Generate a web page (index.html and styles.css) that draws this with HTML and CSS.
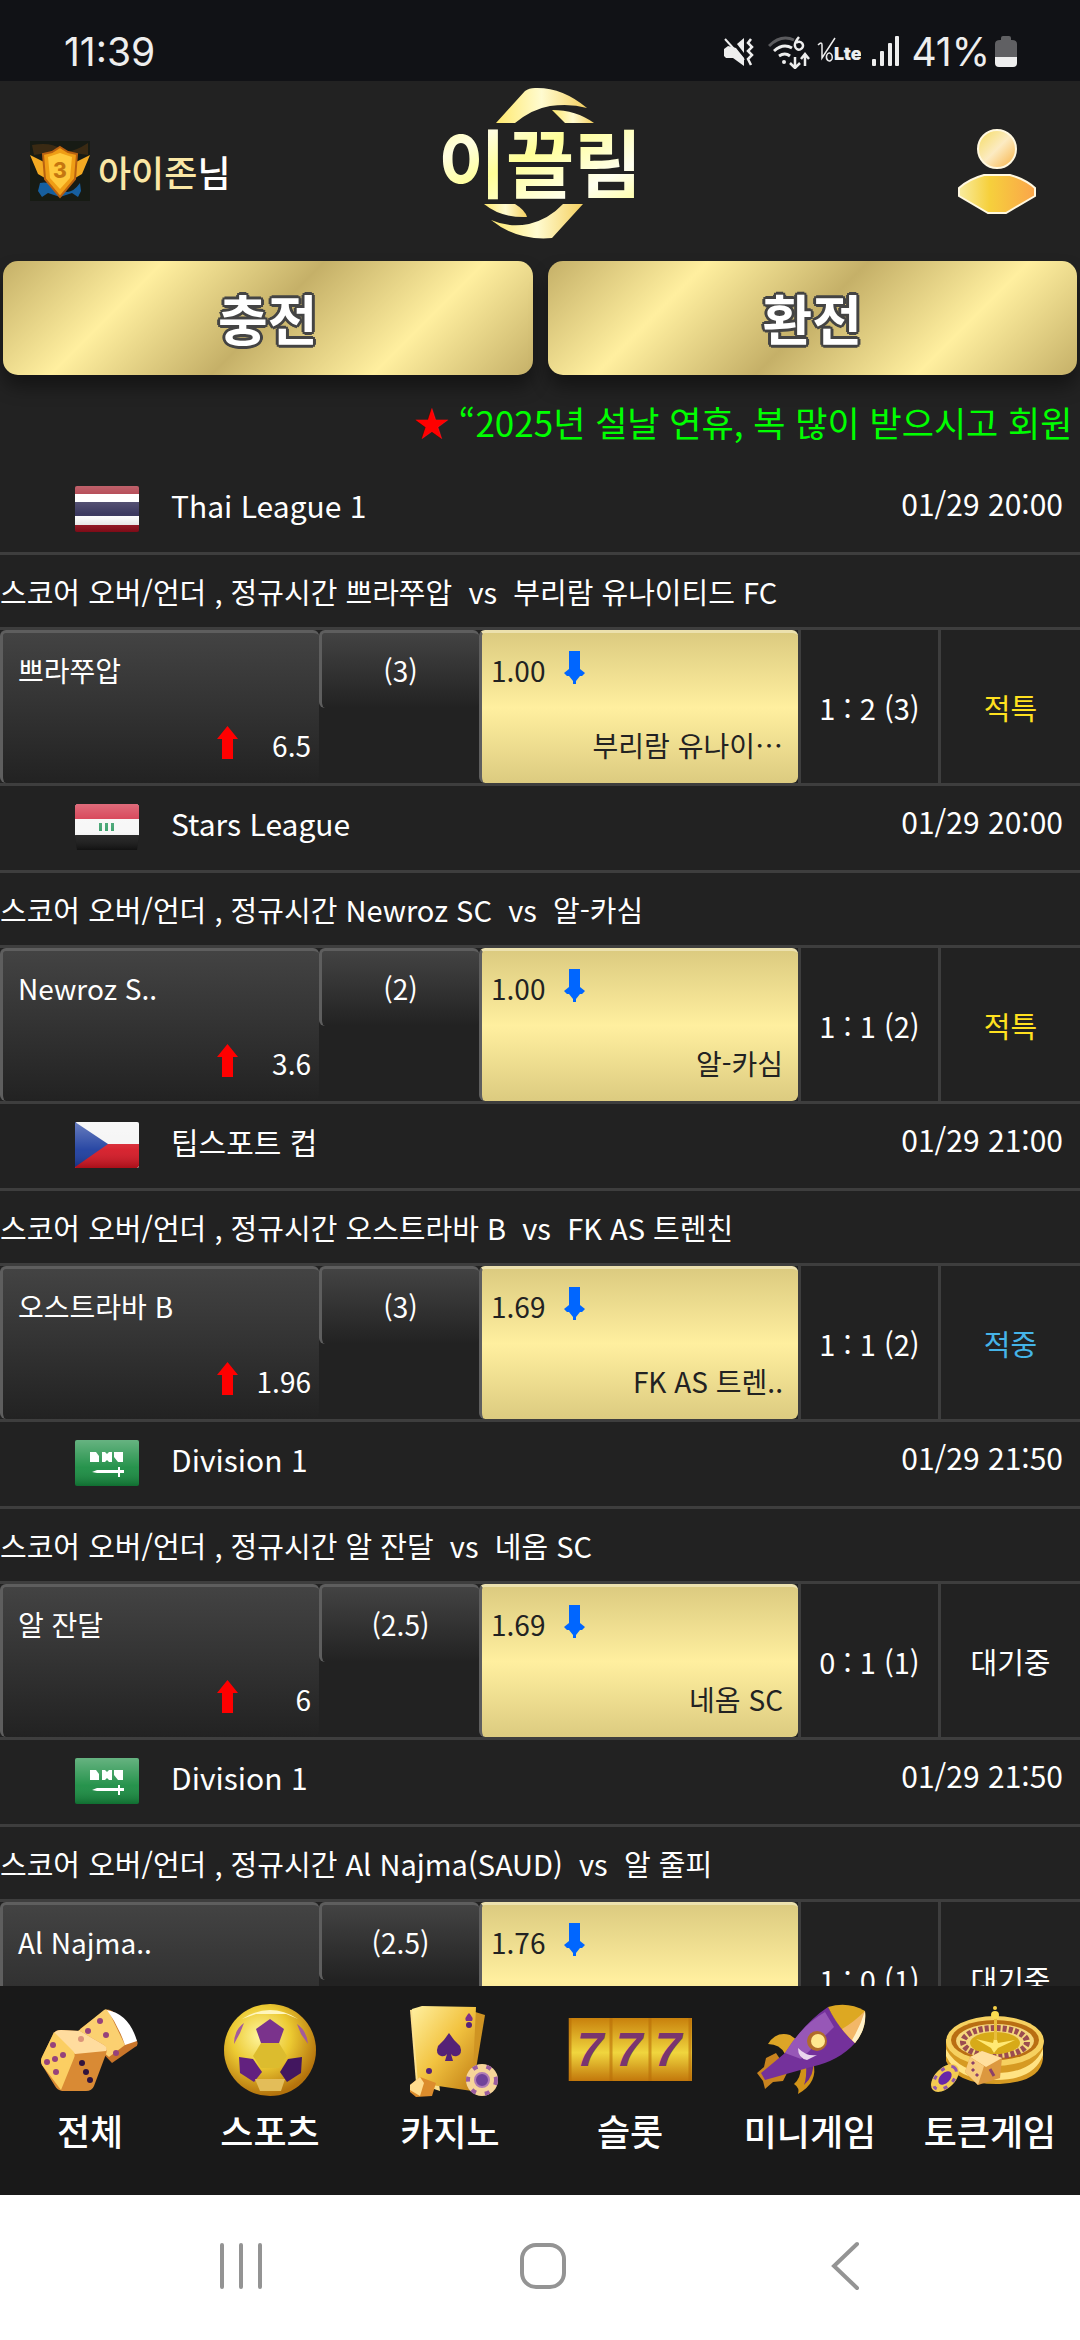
FILE: index.html
```html
<!DOCTYPE html>
<html lang="ko">
<head>
  <meta charset="UTF-8" />
  <meta name="viewport" content="width=device-width, initial-scale=1.0" />
  <title>이끌림</title>
  <link rel="stylesheet" href="styles.css">
</head>
<body>
  <!-- shared flags, arrows and gradients -->
  <svg class="defs" aria-hidden="true">
    <defs>
      <linearGradient id="gloss" x1="0" y1="0" x2="0" y2="1">
        <stop offset="0" stop-color="#fff" stop-opacity=".35" />
        <stop offset=".6" stop-color="#fff" stop-opacity=".08" />
        <stop offset="1" stop-color="#000" stop-opacity=".2" />
      </linearGradient>
      <linearGradient id="gold" x1="0" y1="0" x2="1" y2="1">
        <stop offset="0" stop-color="#fff0a0" />
        <stop offset=".5" stop-color="#f2c340" />
        <stop offset="1" stop-color="#c07e14" />
      </linearGradient>
    </defs>
    <symbol id="flag-th" viewBox="0 0 64 46">
      <rect width="64" height="46" rx="2" fill="#9c0d1c" />
      <rect y="8" width="64" height="31" fill="#fff" />
      <rect y="16" width="64" height="14" fill="#2b2852" />
      <rect width="64" height="46" rx="2" fill="url(#gloss)" />
    </symbol>
    <symbol id="flag-iq" viewBox="0 0 64 46">
      <path d="M2 0h60l2 2v30H0V2z" fill="#f6f6f6" />
      <path d="M2 0h60l2 2v13H0V2z" fill="#cf1c34" />
      <path d="M0 31h64l-2 15H2z" fill="#161616" />
      <path d="M24 19h3v8h-3zM30 19h3v8h-3zM36 19h3v8h-3z" fill="#2f9a63" />
      <path d="M2 0h60l2 2v29l-2 15H2L0 31V2z" fill="url(#gloss)" />
    </symbol>
    <symbol id="flag-cz" viewBox="0 0 64 46">
      <rect width="64" height="46" rx="2" fill="#f4f4f4" />
      <path d="M0 22h64v22l-2 2H0z" fill="#d4121f" />
      <path d="M0 0l33 22L0 45z" fill="#17389c" />
      <rect width="64" height="46" rx="2" fill="url(#gloss)" />
    </symbol>
    <symbol id="flag-sa" viewBox="0 0 64 46">
      <rect width="64" height="46" rx="2" fill="#148a3d" />
      <rect width="64" height="46" rx="2" fill="url(#gloss)" />
      <path d="M15 12h6l3 4v6h-9zM27 12h3l2 2 2-2h3v10h-3l-2-2-2 2h-3zM39 12h9v10h-5l-4-5z" fill="#fff" />
      <path d="M17 32l5-2h21v-3h2v3h4v3h-4v4h-2v-4H22z" fill="#fff" />
    </symbol>
    <symbol id="arrow-up" viewBox="0 0 21 33">
      <path d="M10.500 0L21 13h-5v20H5V13H0z" fill="#f00" />
    </symbol>
    <symbol id="arrow-down" viewBox="0 0 21 33">
      <path d="M5 0h11v18l5 4-3 3h-2l-4 5v3H9v-3l-4-5H3l-3-3 5-4z" fill="#06f" />
    </symbol>
  </svg>

  <div class="status-bar">
    <span class="clock">11:39</span>
    <div class="status-icons">
      <svg width="32" height="32" viewBox="0 0 32 32" fill="#eee">
        <path d="M1 13l4-3 8 2 8 10v8l-11-8H3l-2-2z" />
        <path d="M14 8l7-6v15z" />
        <path d="M2 3l19 21" stroke="#eee" stroke-width="2" />
        <path d="M28 3l-3 4 4 4-4 4 4 4-4 4 3 6" fill="none" stroke="#eee" stroke-width="2.500" />
      </svg>
      <svg class="wifi" width="44" height="34" viewBox="0 0 44 34" fill="none" stroke="#eee" stroke-width="3">
        <path d="M1 11Q13-1 26 5" stroke="#5b5b5e" />
        <path d="M6 16q9-8 18-3M11 21q6-4 11 0" />
        <circle cx="16" cy="27" r="2" fill="#eee" stroke="none" />
        <path d="M31 2q-5 6-4 9a4 4 0 1 0 1-3M27 22v10M22 28l5 5 5-5M37 31V20M33 24l4-5 4 5" stroke-width="2.500" />
      </svg>
      <svg width="44" height="30" viewBox="0 0 44 30">
        <path d="M1 8q4-4 4 0v13l13-20M13 16a3 4 0 1 0 2 6q1-4-2-6" fill="none" stroke="#eee" stroke-width="1.500" />
        <text x="17" y="23" class="lte">Lte</text>
      </svg>
      <svg class="signal" width="28" height="31" viewBox="0 0 28 31" fill="#eee">
        <rect y="23" width="4" height="7" rx="1" />
        <rect x="8" y="15" width="4" height="15" rx="1" />
        <rect x="16" y="7" width="4" height="23" rx="1" />
        <rect x="23" width="4" height="30" rx="1" />
      </svg>
      <span class="percent">41%</span>
      <svg width="22" height="32" viewBox="0 0 22 32">
        <path d="M6 4V2q0-2 2-2h6q2 0 2 2v2h1q5 0 5 4v13H0V8q0-4 5-4z" fill="#606063" />
        <path d="M0 21h22v6q0 4-4 4H4q-4 0-4-4z" fill="#eee" />
      </svg>
    </div>
  </div>

  <header class="header">
    <div class="user">
      <svg width="60" height="60" viewBox="0 0 60 60">
        <rect width="60" height="60" fill="#171b14" />
        <path d="M2 4q20-3 28 4T58 2v12L30 10 4 14z" fill="#3a2a13" />
        <path d="M10 42q10-2 20 6t20-6l1 8-3 6-6-4-12 4-12-4-6 4-4-6z" fill="#175f9f" />
        <path d="M0 14l16 8 4 18L8 33zM60 14l-16 8-4 18 12-7z" fill="#f3aa22" />
        <path d="M30 6l8 5 9 2-2 25-15 18-15-18-2-25 9-2z" fill="#ef9d15" stroke="#b96110" stroke-width="2" />
        <path d="M30 12l12 4-2 21-10 11-10-11-2-21z" fill="#ffc93c" />
        <text x="30" y="37" class="badge-num">3</text>
      </svg>
      <span class="user-name"><em>아이존</em>님</span>
    </div>

    <a class="logo" href="#" aria-label="이끌림">
      <svg width="210" height="172" viewBox="0 0 210 172">
        <defs>
          <linearGradient id="logo-gold" x1="0" y1="0" x2="1" y2="1">
            <stop offset="0" stop-color="#ffff8c" />
            <stop offset=".25" stop-color="#fffde0" />
            <stop offset=".45" stop-color="#ffff96" />
            <stop offset=".75" stop-color="#fffff0" />
            <stop offset="1" stop-color="#ffff8c" />
          </linearGradient>
          <linearGradient id="swoosh" x1="0" y1="0" x2="1" y2="0">
            <stop offset="0" stop-color="#ffe96e" />
            <stop offset=".5" stop-color="#fffbd0" />
            <stop offset="1" stop-color="#f5d060" />
          </linearGradient>
        </defs>
        <path d="M61 38L90 6Q94 3 100 3q27-1 52 20-17-5-37-2-18 3-35 17z" fill="url(#swoosh)" />
        <path d="M117 25q24 0 42 13h-29z" fill="url(#swoosh)" />
        <path d="M49 119h31q10 6 12 13-26 1-43-13z" fill="url(#swoosh)" />
        <path d="M56 135q18 8 38 4 20-5 34-20h20l-31 34q-35 3-61-18z" fill="url(#swoosh)" />
        <text x="105" y="107" class="logo-text" fill="url(#logo-gold)">이끌림</text>
      </svg>
    </a>

    <button class="profile" type="button" aria-label="내 정보">
      <svg width="78" height="86" viewBox="0 0 78 86">
        <defs>
          <linearGradient id="head" x1="0" y1="0" x2="1" y2="1">
            <stop offset="0" stop-color="#f5dc60" />
            <stop offset=".5" stop-color="#fcebc2" />
            <stop offset="1" stop-color="#f8b040" />
          </linearGradient>
          <linearGradient id="torso" x1="0" y1="0" x2="1" y2="0">
            <stop offset="0" stop-color="#f8eca0" />
            <stop offset=".4" stop-color="#f6d03c" />
            <stop offset="1" stop-color="#faa54a" />
          </linearGradient>
        </defs>
        <circle cx="39" cy="21" r="19" fill="url(#head)" stroke="#fff8e0" stroke-width="2" />
        <path d="M26 47h26q15 4 25 13v8L48 85H30L1 68v-8q10-9 25-13z" fill="url(#torso)" stroke="#fff8e0" stroke-width="2" />
      </svg>
    </button>
  </header>

  <div class="money-btns">
    <button class="money-btn" type="button">충전</button>
    <button class="money-btn" type="button">환전</button>
  </div>

  <div class="notice"><span class="star">★</span> “2025년 설날 연휴, 복 많이 받으시고 회원</div>

  <main class="games">
    <section class="game">
      <div class="league">
        <svg class="flag"><use href="#flag-th" /></svg>
        <span class="league-name">Thai League 1</span>
        <time class="date">01/29 20:00</time>
      </div>
      <div class="match">스코어 오버/언더 , 정규시간 쁘라쭈압&nbsp; vs &nbsp;부리람 유나이티드 FC</div>
      <div class="odds">
        <button class="pick home" type="button">
          <span class="team">쁘라쭈압</span>
          <span class="rate"><svg class="arrow"><use href="#arrow-up" /></svg><span class="num">6.5</span></span>
        </button>
        <button class="pick base" type="button">(3)</button>
        <button class="pick away" type="button">
          <span class="rate"><span>1.00</span><svg class="arrow"><use href="#arrow-down" /></svg></span>
          <span class="team">부리람 유나이…</span>
        </button>
        <div class="score">1 : 2 (3)</div>
        <div class="result special">적특</div>
      </div>
    </section>

    <section class="game">
      <div class="league">
        <svg class="flag"><use href="#flag-iq" /></svg>
        <span class="league-name">Stars League</span>
        <time class="date">01/29 20:00</time>
      </div>
      <div class="match">스코어 오버/언더 , 정규시간 Newroz SC&nbsp; vs &nbsp;알-카심</div>
      <div class="odds">
        <button class="pick home" type="button">
          <span class="team">Newroz S..</span>
          <span class="rate"><svg class="arrow"><use href="#arrow-up" /></svg><span class="num">3.6</span></span>
        </button>
        <button class="pick base" type="button">(2)</button>
        <button class="pick away" type="button">
          <span class="rate"><span>1.00</span><svg class="arrow"><use href="#arrow-down" /></svg></span>
          <span class="team">알-카심</span>
        </button>
        <div class="score">1 : 1 (2)</div>
        <div class="result special">적특</div>
      </div>
    </section>

    <section class="game">
      <div class="league">
        <svg class="flag"><use href="#flag-cz" /></svg>
        <span class="league-name">팁스포트 컵</span>
        <time class="date">01/29 21:00</time>
      </div>
      <div class="match">스코어 오버/언더 , 정규시간 오스트라바 B&nbsp; vs &nbsp;FK AS 트렌친</div>
      <div class="odds">
        <button class="pick home" type="button">
          <span class="team">오스트라바 B</span>
          <span class="rate"><svg class="arrow"><use href="#arrow-up" /></svg><span class="num">1.96</span></span>
        </button>
        <button class="pick base" type="button">(3)</button>
        <button class="pick away" type="button">
          <span class="rate"><span>1.69</span><svg class="arrow"><use href="#arrow-down" /></svg></span>
          <span class="team">FK AS 트렌..</span>
        </button>
        <div class="score">1 : 1 (2)</div>
        <div class="result win">적중</div>
      </div>
    </section>

    <section class="game">
      <div class="league">
        <svg class="flag"><use href="#flag-sa" /></svg>
        <span class="league-name">Division 1</span>
        <time class="date">01/29 21:50</time>
      </div>
      <div class="match">스코어 오버/언더 , 정규시간 알 잔달&nbsp; vs &nbsp;네옴 SC</div>
      <div class="odds">
        <button class="pick home" type="button">
          <span class="team">알 잔달</span>
          <span class="rate"><svg class="arrow"><use href="#arrow-up" /></svg><span class="num">6</span></span>
        </button>
        <button class="pick base" type="button">(2.5)</button>
        <button class="pick away" type="button">
          <span class="rate"><span>1.69</span><svg class="arrow"><use href="#arrow-down" /></svg></span>
          <span class="team">네옴 SC</span>
        </button>
        <div class="score">0 : 1 (1)</div>
        <div class="result">대기중</div>
      </div>
    </section>

    <section class="game">
      <div class="league">
        <svg class="flag"><use href="#flag-sa" /></svg>
        <span class="league-name">Division 1</span>
        <time class="date">01/29 21:50</time>
      </div>
      <div class="match">스코어 오버/언더 , 정규시간 Al Najma(SAUD)&nbsp; vs &nbsp;알 줄피</div>
      <div class="odds">
        <button class="pick home" type="button">
          <span class="team">Al Najma..</span>
        </button>
        <button class="pick base" type="button">(2.5)</button>
        <button class="pick away" type="button">
          <span class="rate"><span>1.76</span><svg class="arrow"><use href="#arrow-down" /></svg></span>
        </button>
        <div class="score">1 : 0 (1)</div>
        <div class="result">대기중</div>
      </div>
    </section>
  </main>

  <nav class="tabs">
    <a class="tab" href="#">
      <svg width="124" height="94" viewBox="0 0 124 94">
        <path d="M52 26L76 8q4-3 8 0 14 8 25 30 2 4-2 6L84 60z" fill="#c9752a" />
        <path d="M50 28L76 7q3-2 5 2l16 33-16 12z" fill="#fbd070" />
        <path d="M79 7q22 4 30 31l-12 4Q90 22 79 7z" fill="#fff" />
        <path d="M26 30q2-3 7-3l19 1 24 14q4 4 2 9L66 83q-2 5-8 5H34q-5-1-7-5L14 62q-2-4 0-8z" fill="#d98a34" />
        <path d="M26 30q2-3 7-3l19 1 24 14q4 3 2 6l-31 3-7-6z" fill="#ffdc9e" />
        <path d="M26 29l18 18q4 3 2 8L33 87 14 62q-2-4 0-8z" fill="#fbce62" />
        <g fill="#96427b">
          <circle cx="25" cy="42" r="3" /><circle cx="35" cy="52" r="3" /><circle cx="27" cy="56" r="3" />
          <circle cx="19" cy="59" r="3" /><circle cx="28" cy="69" r="3" /><circle cx="53" cy="36" r="3" fill="#dc947a" />
          <circle cx="60" cy="28" r="3" /><circle cx="72" cy="18" r="3" /><circle cx="78" cy="32" r="3" />
          <circle cx="88" cy="50" r="3" />
        </g>
        <g fill="#31133d">
          <circle cx="54" cy="60" r="3" /><circle cx="58" cy="69" r="3" /><circle cx="62" cy="77" r="3" />
        </g>
      </svg>
      <span>전체</span>
    </a>
    <a class="tab" href="#">
      <svg width="124" height="94" viewBox="0 0 124 94">
        <defs>
          <radialGradient id="ball" cx=".4" cy=".35" r=".65">
            <stop offset="0" stop-color="#fff6a0" />
            <stop offset=".5" stop-color="#ecca32" />
            <stop offset="1" stop-color="#b4720c" />
          </radialGradient>
        </defs>
        <circle cx="62" cy="47" r="46" fill="url(#ball)" />
        <path d="M34 16Q62-2 90 16L78 11H48z" fill="#fff6bd" />
        <path d="M62 16l14 10-5 14H53l-5-14z" fill="#7a338c" />
        <path d="M31 54l14 2 9 13-8 10-14-9z" fill="#62217f" />
        <path d="M94 54l-14 2-8 13 7 10 14-9z" fill="#42165f" />
        <path d="M36 20q-10 7-10 21l6-11zM89 21q10 7 11 20l-7-10z" fill="#a35a9c" />
        <path d="M53 40h18l8 13-8 12H53l-8-12z" fill="#dcbc2e" />
        <path d="M47 76h30l-4 12H52z" fill="#e3bd59" />
      </svg>
      <span>스포츠</span>
    </a>
    <a class="tab" href="#">
      <svg width="124" height="94" viewBox="0 0 124 94">
        <path d="M84 8l13 4-12 72-16-4z" fill="#cf9423" />
        <path d="M22 7l20-3 10 84-24-8z" fill="#fbe08c" />
        <path d="M34 3l54 1-4 84-54-8-6-74z" fill="url(#gold)" />
        <path d="M61 30q5 8 11 13 3 8-3 10-4 1-6-2l2 7h-8l2-7q-2 3-6 2-6-2-3-10 6-5 11-13z" fill="#552276" />
        <path d="M81 10q5 5 3 8h-6q-2-3 3-8z" fill="#7d318b" /><circle cx="81" cy="22" r="3" fill="#552276" />
        <circle cx="41" cy="68" r="3" fill="#552276" />
        <path d="M22 82l10-8 16 6-4 13-16 1-6-5z" fill="#dc8c2c" />
        <path d="M22 82l10-8 4 6-4 13-10-6z" fill="#ffdc8e" />
        <circle cx="94" cy="77" r="16" fill="#f6d599" />
        <circle cx="94" cy="77" r="14" fill="none" stroke="#9b5da0" stroke-width="4" stroke-dasharray="5 9" />
        <circle cx="94" cy="77" r="7" fill="#70429a" stroke="#b07cb5" stroke-width="2" />
      </svg>
      <span>카지노</span>
    </a>
    <a class="tab" href="#">
      <svg width="124" height="94" viewBox="0 0 124 94">
        <defs>
          <linearGradient id="reel" x1="0" y1="0" x2="0" y2="1">
            <stop offset="0" stop-color="#c8800c" />
            <stop offset=".55" stop-color="#f0d63e" />
            <stop offset="1" stop-color="#c2770b" />
          </linearGradient>
        </defs>
        <rect x="1" y="15" width="123" height="63" fill="url(#reel)" />
        <path d="M2 15v63M43 15v63M82 15v63M122 15v63" stroke="#b96e08" stroke-opacity=".6" stroke-width="3" />
        <g class="sevens">
          <text x="22" y="63">7</text>
          <text x="61" y="63">7</text>
          <text x="100" y="63">7</text>
        </g>
      </svg>
      <span>슬롯</span>
    </a>
    <a class="tab" href="#">
      <svg width="124" height="94" viewBox="0 0 124 94">
        <path d="M20 41q8-13 22-9l7 5-12 14q-5-10-17-10z" fill="#dda526" />
        <path d="M53 63l12-4q6 20-15 32 2-6-4-10 7-6 7-18z" fill="#d29318" />
        <path d="M58 61l7-3q2 14-9 24 3-8 2-21z" fill="#6b2b88" />
        <path d="M28 50l-10 5-2 9-7 6 6 8 2 8 8-7 10-1 5-10z" fill="#c9841f" />
        <path d="M80 4q12 22 27 36-16 18-44 24L17 77l-4-7 24-20Q56 20 80 4z" fill="#74319b" />
        <path d="M77 9q6 10 9 15L53 56 37 50Q54 22 77 9z" fill="#9757b7" />
        <path d="M80 4q20-6 37 4 2 17-10 32Q90 25 80 4z" fill="#dda822" />
        <path d="M94 26q12-7 23-18-1 20-10 32-7-6-13-14z" fill="#f2b768" />
        <path d="M117 8q2 18-10 32l-3-3Q112 24 117 8z" fill="#fff1c9" />
        <circle cx="69" cy="38" r="10" fill="#b16c2a" /><circle cx="70" cy="38" r="7" fill="#ffe88f" />
        <path d="M50 45q9 9 19 7l-10 5q-9-2-9-12z" fill="#ead6ed" />
      </svg>
      <span>미니게임</span>
    </a>
    <a class="tab" href="#">
      <svg width="124" height="94" viewBox="0 0 124 94">
        <path d="M18 36v22q10 24 54 23 40-2 43-25V36z" fill="#d69a22" />
        <path d="M18 46q14 25 50 24 36 0 47-24v6q-9 25-47 25-38 1-50-24z" fill="#ffe383" />
        <ellipse cx="67" cy="38" rx="49" ry="25" fill="#f6d160" />
        <ellipse cx="67" cy="37" rx="44" ry="20" fill="#b96e12" />
        <ellipse cx="67" cy="38" rx="39" ry="17" fill="#f5d77c" />
        <ellipse cx="67" cy="39" rx="32" ry="14" fill="none" stroke="#9b4c50" stroke-width="6" stroke-dasharray="4 2" />
        <ellipse cx="67" cy="40" rx="25" ry="11" fill="#d7aa18" />
        <path d="M48 36l17 4 2-9 3 9 17-3-17 8-4 5-3-5z" fill="#ffe974" />
        <path d="M66 12h3v25h-3z" fill="#e8bd3b" /><circle cx="67" cy="12" r="4" fill="#fbdc51" />
        <circle cx="67" cy="5" r="2" fill="#f5cf48" />
        <ellipse cx="17" cy="75" rx="17" ry="10" fill="#f3cb52" transform="rotate(-45 17 75)" />
        <ellipse cx="17" cy="75" rx="14" ry="8" fill="none" stroke="#9056aa" stroke-width="3" stroke-dasharray="4 7" transform="rotate(-45 17 75)" />
        <ellipse cx="17" cy="75" rx="8" ry="5" fill="#6727a8" transform="rotate(-45 17 75)" />
        <path d="M42 54l12-6 20 7-2 20-22 7-13-13z" fill="#dc983f" />
        <path d="M42 54l12-6 20 7-16 9z" fill="#ffdf9d" />
        <path d="M42 54l14 9-6 19-13-13z" fill="#f8cb7b" />
        <path d="M44 59l2 2M44 66l2 2M50 71l-2 2M62 66l4 7" stroke="#8c4169" stroke-width="3" />
      </svg>
      <span>토큰게임</span>
    </a>
  </nav>

  <div class="system-nav">
    <button type="button" aria-label="최근 앱">
      <svg width="48" height="50" viewBox="0 0 48 50" stroke="#949494" stroke-width="4" stroke-linecap="round">
        <path d="M5 4v42M24 4v42M43 4v42" />
      </svg>
    </button>
    <button type="button" aria-label="홈">
      <svg width="48" height="50" viewBox="0 0 48 50" fill="none" stroke="#949494" stroke-width="4">
        <rect x="3" y="4" width="42" height="42" rx="14" />
      </svg>
    </button>
    <button type="button" aria-label="뒤로">
      <svg width="48" height="50" viewBox="0 0 48 50" fill="none" stroke="#949494" stroke-width="4" stroke-linecap="round">
        <path d="M36 3L13 25l23 22" />
      </svg>
    </button>
  </div>
</body>
</html>
```

FILE: styles.css
```css
* {
  box-sizing: border-box;
}

body {
  margin: 0;
  height: 100vh;
  display: flex;
  flex-direction: column;
  overflow: hidden;
  background: #222;
  color: #fff;
  font-family: 'Noto Sans CJK KR', 'Noto Sans', sans-serif;
  font-size: 30px;
}

button {
  margin: 0;
  padding: 0;
  border: none;
  background: none;
  color: inherit;
  font: inherit;
}

a {
  color: inherit;
  text-decoration: none;
}

svg {
  display: block;
  flex: none;
}

.defs {
  position: absolute;
  width: 0;
  height: 0;
}

/* status bar */
.status-bar {
  flex: none;
  display: flex;
  justify-content: space-between;
  align-items: center;
  padding: 22px 63px 0 64px;
  height: 81px;
  background: #111216;
  color: #eee;
  font-family: Inter, Roboto, sans-serif;
  font-size: 39px;
}

.status-icons {
  display: flex;
  align-items: center;
  gap: 5px;
}

.wifi {
  margin-left: 8px;
}

.signal {
  margin: 0 6px;
}

.lte {
  font-family: Inter, Roboto, sans-serif;
  font-size: 18px;
  font-weight: 900;
  fill: #eee;
}

/* header */
.header {
  flex: none;
  display: grid;
  grid-template-columns: 1fr auto 1fr;
  align-items: center;
  height: 180px;
  padding: 0 30px;
}

.user {
  display: flex;
  align-items: center;
  gap: 8px;
}

.user-name {
  font-size: 36px;
  font-weight: 500;
}

.user-name em {
  font-style: normal;
  color: #fae7a5;
}

.badge-num {
  font-family: Inter, Roboto, sans-serif;
  font-size: 21px;
  font-weight: 800;
  text-anchor: middle;
  fill: #c57610;
}

.logo-text {
  font-size: 74px;
  font-weight: 700;
  text-anchor: middle;
}

.profile {
  justify-self: end;
  padding-right: 14px;
}

/* deposit / withdraw */
.money-btns {
  flex: none;
  display: flex;
  gap: 15px;
  padding: 0 3px;
}

.money-btn {
  flex: 1;
  height: 114px;
  border-radius: 15px;
  background: linear-gradient(135deg, #c5b068, #ffef9f 25%, #c5b068 50%, #ffef9f 75%, #c5b068);
  box-shadow: 0 12px 18px rgba(0, 0, 0, 0.4);
  font-size: 54px;
  font-weight: 700;
  line-height: 114px;
  text-shadow: 3px 0 #444, -3px 0 #444, 0 3px #444, 0 -3px #444,
    2px 2px #444, -2px 2px #444, 2px -2px #444, -2px -2px #444;
}

.notice {
  flex: none;
  height: 93px;
  padding-left: 414px;
  overflow: hidden;
  white-space: nowrap;
  color: #0f0;
  font-size: 35px;
  line-height: 94px;
}

.star {
  color: #f00;
}

/* game list */
.games {
  flex: 1;
  min-height: 0;
  overflow: hidden;
}

.league {
  display: flex;
  height: 87px;
  padding: 0 17px 0 75px;
  border-bottom: 3px solid #3e3e3e;
}

.flag {
  width: 64px;
  height: 46px;
  margin-top: 18px;
}

.league-name {
  flex: 1;
  padding-left: 32px;
  line-height: 75px;
}

.date {
  line-height: 71px;
}

.match {
  border-bottom: 3px solid #3e3e3e;
  font-size: 29px;
  line-height: 72px;
  white-space: nowrap;
}

.odds {
  display: grid;
  grid-template-columns: 319fr 160fr 319fr 140fr 142fr;
  min-height: 156px;
  border-bottom: 3px solid #3e3e3e;
}

.pick {
  min-width: 0;
  border: solid #5e5e5e;
  border-width: 3px 0 0 3px;
  border-radius: 6px;
  background: linear-gradient(#434343, #222);
  font-size: 28px;
  line-height: 75px;
  white-space: nowrap;
}

.home,
.away {
  display: flex;
  flex-direction: column;
  align-items: flex-start;
}

.home .team {
  padding-left: 15px;
}

.home .rate {
  display: flex;
  align-self: flex-end;
  padding-right: 8px;
}

.arrow {
  width: 21px;
  height: 33px;
  margin-top: 18px;
}

.num {
  width: 73px;
  text-align: right;
}

.base {
  align-self: start;
}

.away {
  border-top-color: #ece1ae;
  background: linear-gradient(#dccb80, #ffef9f 50%, #dccb80);
  color: #222;
}

.away .rate {
  display: flex;
  gap: 19px;
  padding-left: 9px;
}

.away .team {
  align-self: flex-end;
  padding-right: 15px;
}

.score,
.result {
  display: flex;
  align-items: center;
  justify-content: center;
  border-left: 3px solid #3e3e3e;
  font-size: 29px;
  white-space: nowrap;
}

.special {
  color: #ffe11f;
}

.win {
  color: #45b4e8;
}

/* bottom tabs */
.tabs {
  flex: none;
  display: flex;
  padding: 17px 0 32px;
  background: #191919;
}

.tab {
  flex: 1;
  display: flex;
  flex-direction: column;
  align-items: center;
  font-size: 36px;
  font-weight: 500;
  line-height: 66px;
}

.sevens {
  font-family: 'Liberation Sans', sans-serif;
  font-size: 48px;
  font-weight: 700;
  font-style: italic;
  text-anchor: middle;
  fill: #79356f;
}

.system-nav {
  flex: none;
  display: flex;
  height: 145px;
  padding: 0 84px 3px 90px;
  background: #fff;
}

.system-nav button {
  flex: 1;
  display: flex;
  align-items: center;
  justify-content: center;
}
```
